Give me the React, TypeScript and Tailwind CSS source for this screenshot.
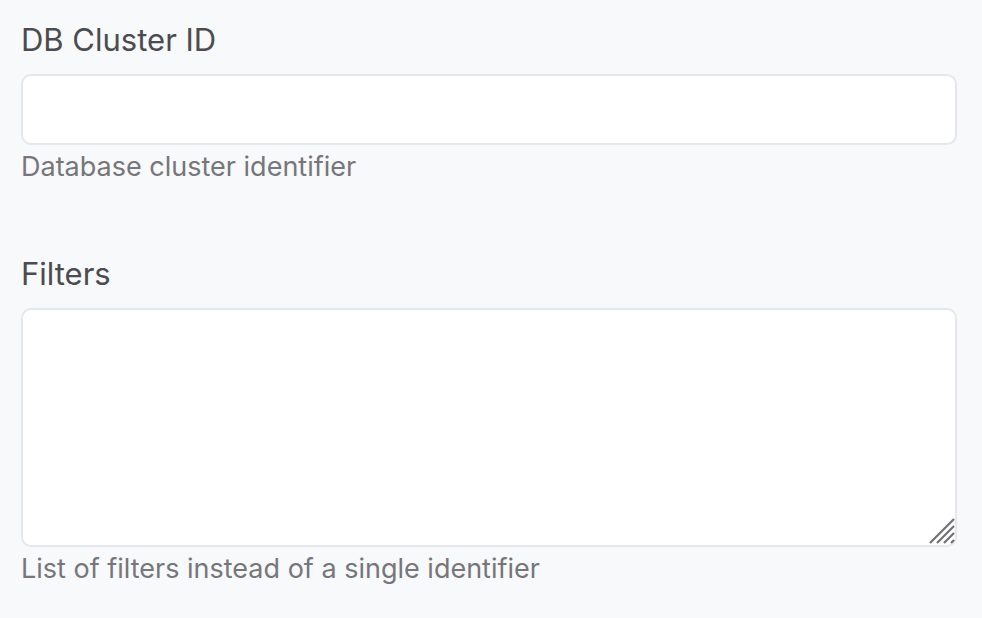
import React from "react";

function Field({ label, help, children }: { label: string; help: string; children: React.ReactNode }) {
  return (
    <div className="flex flex-col">
      <label className="text-[31px] leading-[36px] text-[#4b4b50] mb-[16px]">{label}</label>
      {children}
      <p className="text-[27px] leading-[32px] text-[#76767c] mt-[6px]">{help}</p>
    </div>
  );
}

export default function App() {
  return (
    <div className="w-[982px] h-[618px] bg-[#f8f9fb] px-[21px] pt-[22px] font-['Inter',sans-serif] overflow-hidden">
      <div className="flex flex-col gap-[73px] w-[936px]">
        <Field label="DB Cluster ID" help="Database cluster identifier">
          <input
            type="text"
            className="h-[71px] w-full rounded-[10px] border-2 border-[#e6e7eb] bg-white px-4 text-[26px] outline-none"
          />
        </Field>
        <Field label="Filters" help="List of filters instead of a single identifier">
          <div className="relative">
            <textarea className="block h-[239px] w-full resize-none rounded-[10px] border-2 border-[#e6e7eb] bg-white px-4 py-3 text-[26px] outline-none" />
            <svg className="absolute right-[2px] bottom-[3px]" width="26" height="26" viewBox="0 0 26 26">
              <g stroke="#6f6f73" strokeWidth="2.2">
                <line x1="1" y1="25" x2="25" y2="1" />
                <line x1="8" y1="25" x2="25" y2="8" />
                <line x1="15" y1="25" x2="25" y2="15" />
                <line x1="22" y1="25" x2="25" y2="22" />
              </g>
            </svg>
          </div>
        </Field>
      </div>
    </div>
  );
}
